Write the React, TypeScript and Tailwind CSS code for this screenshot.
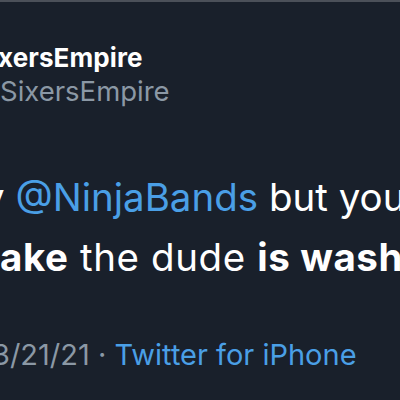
export default function App() {
  return (
    <div className="w-[400px] h-[400px] overflow-hidden bg-[#19202b] border-t-2 border-[#4b5059] font-['Inter',sans-serif] whitespace-nowrap">
      <div className="pt-[40px] flex flex-col">
        <div className="text-[26px] font-bold leading-[32px] tracking-[0.1px] text-white -ml-[2px]">
          <span className="relative"><span className="absolute right-full">Si</span></span>xersEmpire
        </div>
        <div className="text-[27.5px] leading-[34px] text-[#8b98a5]">
          <span className="relative"><span className="absolute right-full">@</span></span>SixersEmpire
        </div>
        <div className="mt-[59px] text-[38.5px] leading-[60px] text-white">
          <div className="-ml-[17px]">
            <span className="relative"><span className="absolute right-full">b</span></span>y{" "}
            <span className="text-[#4a9fe6]">@NinjaBands</span> but you
          </div>
          <div className="tracking-[0.6px]">
            <span className="font-bold">
              <span className="relative"><span className="absolute right-full">m</span></span>ake
            </span>{" "}
            the dude <span className="font-bold">is washed</span>
          </div>
        </div>
        <div className="mt-[50px] text-[29px] leading-[36px] text-[#8b98a5] -ml-[8px]">
          <span className="relative"><span className="absolute right-full">8/21/2</span></span>3/21/21 ·{" "}
          <span className="text-[#4a9fe6]">Twitter for iPhone</span>
        </div>
      </div>
    </div>
  );
}
